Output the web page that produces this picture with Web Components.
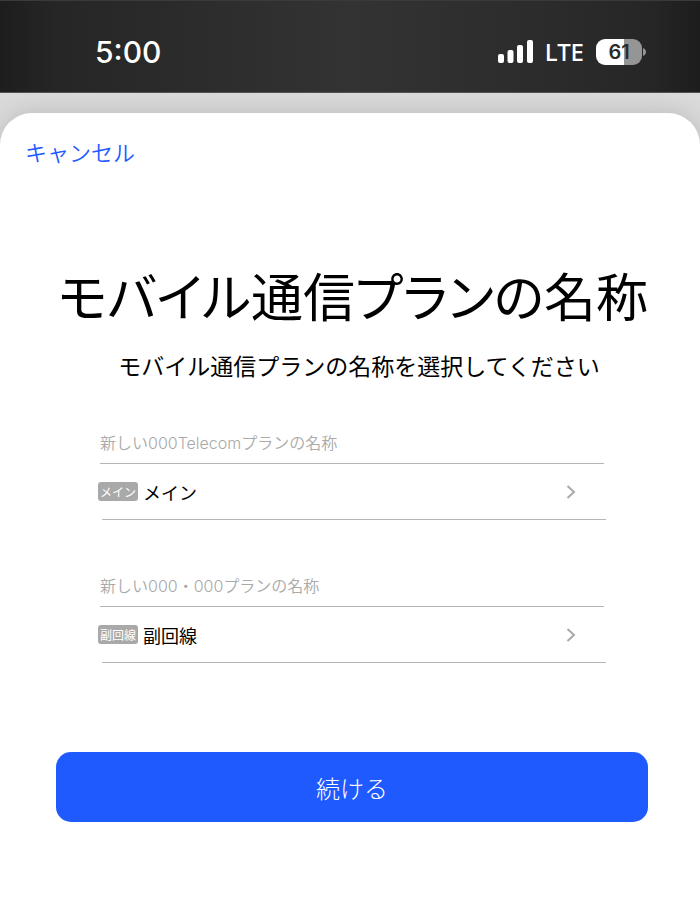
<!DOCTYPE html>
<html lang="ja">
<head>
<meta charset="utf-8">
<meta name="viewport" content="width=device-width, initial-scale=1">
<title>モバイル通信プランの名称</title>
<style>
  body {
    margin: 0;
    background: #fff;
    color: #000;
    font-family: "Noto Sans CJK JP", sans-serif;
  }
</style>
</head>
<body>
<plan-screen></plan-screen>

<script>
class StatusBar extends HTMLElement {
  constructor() {
    super();
    this.attachShadow({ mode: "open" });
  }

  static get styles() {
    return /* css */`
      :host {
        display: flex;
        align-items: center;
        justify-content: space-between;
        box-sizing: border-box;
        height: 93px;
        padding: 10px 54px 0 95px;
        background: linear-gradient(90deg, #1d1d1d, #262627 8%, #2b2b2c 25%, #333334 50%, #2b2b2c 80%, #262627 93%, #1d1d1d);
        border-top: 1px solid #3a3a3b;
        border-bottom: 1px solid #505050;
        color: #fff;
        font-family: Inter, sans-serif;
      }

      .time {
        font-size: 30px;
        font-weight: 500;
      }

      .status {
        display: flex;
        align-items: center;
        gap: 12px;
      }

      .network {
        font-family: "Noto Sans", sans-serif;
        font-size: 24px;
        font-weight: 500;
        line-height: 26px;
      }

      svg {
        display: block;
      }

      .battery {
        display: flex;
        align-items: center;
        gap: 1px;
      }

      .level {
        width: 46px;
        height: 26px;
        border-radius: 9px;
        background: linear-gradient(90deg, #fff 61%, #959595 61%);
        color: #2b2b2c;
        font-size: 20px;
        font-weight: 600;
        line-height: 26px;
        text-align: center;
      }
    `;
  }

  connectedCallback() {
    this.render();
  }

  render() {
    this.shadowRoot.innerHTML = /* html */`
    <style>${StatusBar.styles}</style>
    <span class="time">5:00</span>
    <div class="status">
      <svg width="35" height="23" viewBox="0 0 35 23" fill="#fff" aria-hidden="true">
        <rect x="0" y="14" width="6" height="9" rx="2"/>
        <rect x="9.500" y="10" width="6" height="13" rx="2"/>
        <rect x="19" y="5" width="6" height="18" rx="2"/>
        <rect x="29" y="0" width="6" height="23" rx="2"/>
      </svg>
      <span class="network">LTE</span>
      <div class="battery">
        <div class="level">61</div>
        <svg width="3" height="8" viewBox="0 0 3 8" fill="#959595" aria-hidden="true"><path d="M0 0C4 1.500 4 6.500 0 8Z"/></svg>
      </div>
    </div>`;
  }
}

class ModalSheet extends HTMLElement {
  constructor() {
    super();
    this.attachShadow({ mode: "open" });
  }

  static get styles() {
    return /* css */`
      :host {
        display: flex;
        flex-direction: column;
        flex: 1;
        padding-top: 20px;
        background: #dadada;
        overflow: hidden;
      }

      .sheet {
        flex: 1;
        background: #fff;
        border-radius: 32px 32px 0 0;
        box-shadow: 0 0 24px rgba(0, 0, 0, 0.15);
      }

      .bar {
        display: flex;
        padding: 22px 25px 0;
      }
    `;
  }

  connectedCallback() {
    this.render();
  }

  render() {
    this.shadowRoot.innerHTML = /* html */`
    <style>${ModalSheet.styles}</style>
    <div class="sheet">
      <div class="bar"><slot name="action"></slot></div>
      <slot></slot>
    </div>`;
  }
}

class PlanGroup extends HTMLElement {
  constructor() {
    super();
    this.attachShadow({ mode: "open" });
  }

  static get styles() {
    return /* css */`
      :host {
        display: block;
      }

      h2 {
        margin: 0 2px;
        padding-bottom: 8px;
        border-bottom: 1px solid #b5b5b5;
        color: #a9a9a9;
        font-family: Inter, "Noto Sans CJK JP", sans-serif;
        font-size: 16px;
        font-weight: 350;
        line-height: 24px;
        white-space: nowrap;
      }

      button {
        display: flex;
        align-items: center;
        gap: 5px;
        width: 100%;
        height: 55px;
        padding: 0 30px 0 0;
        border: 0;
        background: none;
        color: #000;
        font: inherit;
        font-size: 18px;
        text-align: left;
      }

      .badge {
        width: 40px;
        border-radius: 3px;
        background: #a9a9a9;
        color: #fff;
        font-size: 12px;
        line-height: 19px;
        text-align: center;
      }

      svg {
        margin-left: auto;
      }

      hr {
        margin: 0 0 0 4px;
        border: 0;
        border-top: 1px solid #b5b5b5;
      }
    `;
  }

  connectedCallback() {
    this.render();
  }

  render() {
    const name = this.getAttribute("name");
    this.shadowRoot.innerHTML = /* html */`
    <style>${PlanGroup.styles}</style>
    <h2><slot></slot></h2>
    <button type="button">
      <span class="badge">${name}</span>
      <span>${name}</span>
      <svg width="10" height="14" viewBox="0 0 10 14" fill="none" stroke="#a9a9a9" stroke-width="2" aria-hidden="true"><path d="M1.500 1L8 7L1.500 13"/></svg>
    </button>
    <hr>`;
  }
}

class PrimaryButton extends HTMLElement {
  constructor() {
    super();
    this.attachShadow({ mode: "open" });
  }

  static get styles() {
    return /* css */`
      :host {
        display: block;
      }

      button {
        display: block;
        width: 100%;
        height: 70px;
        border: 0;
        border-radius: 15px;
        background: #1f5aff;
        color: #fff;
        font: inherit;
        font-size: 24px;
        font-weight: 300;
      }
    `;
  }

  connectedCallback() {
    this.render();
  }

  render() {
    this.shadowRoot.innerHTML = /* html */`
    <style>${PrimaryButton.styles}</style>
    <button type="button"><slot></slot></button>`;
  }
}

class PlanScreen extends HTMLElement {
  constructor() {
    super();
    this.attachShadow({ mode: "open" });
  }

  static get styles() {
    return /* css */`
      :host {
        display: flex;
        flex-direction: column;
        min-height: 100vh;
      }

      .cancel {
        padding: 0;
        border: 0;
        background: none;
        color: #1f5aff;
        font: inherit;
        font-size: 22px;
        font-weight: 350;
        line-height: 32px;
      }

      header {
        padding: 90px 0 0 6px;
        text-align: center;
      }

      h1 {
        margin: 0;
        font-size: 52px;
        font-weight: 400;
        font-feature-settings: "palt";
        line-height: 76px;
        white-space: nowrap;
      }

      p {
        margin: 14px 0 0 12px;
        font-size: 23px;
        line-height: 36px;
      }

      .plans {
        display: grid;
        gap: 54px;
        padding: 48px 94px 0 98px;
      }

      primary-button {
        padding: 89px 52px 0 56px;
      }
    `;
  }

  connectedCallback() {
    this.render();
  }

  render() {
    this.shadowRoot.innerHTML = /* html */`
    <style>${PlanScreen.styles}</style>
    <status-bar></status-bar>
    <modal-sheet>
      <button class="cancel" type="button" slot="action">キャンセル</button>
      <header>
        <h1>モバイル通信プランの名称</h1>
        <p>モバイル通信プランの名称を選択してください</p>
      </header>
      <div class="plans">
        <plan-group name="メイン">新しい000Telecomプランの名称</plan-group>
        <plan-group name="副回線">新しい000・000プランの名称</plan-group>
      </div>
      <primary-button>続ける</primary-button>
    </modal-sheet>`;
  }
}

customElements.define("status-bar", StatusBar);
customElements.define("modal-sheet", ModalSheet);
customElements.define("plan-group", PlanGroup);
customElements.define("primary-button", PrimaryButton);
customElements.define("plan-screen", PlanScreen);
</script>
</body>
</html>
